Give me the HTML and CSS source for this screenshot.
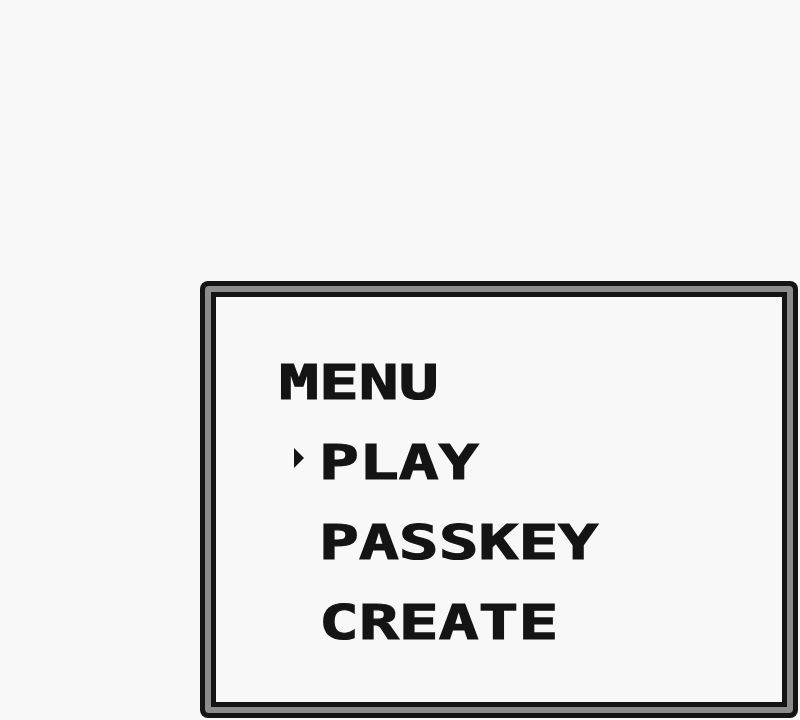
FILE: index.html
```html
<!DOCTYPE html>
<html>
<head>
<meta charset="utf-8">
<link rel="stylesheet" href="styles.css">
</head>
<body>
<div class="screen">
  <div class="frame">
    <div class="rail">
      <div class="panel">
        <div class="row title"><span class="txt">MENU</span></div>
        <div class="row item"><span class="cursor"><span class="tri"></span></span><span class="txt">PLAY</span></div>
        <div class="row item"><span class="cursor"></span><span class="txt">PASSKEY</span></div>
        <div class="row item"><span class="cursor"></span><span class="txt">CREATE</span></div>
      </div>
    </div>
  </div>
</div>
</body>
</html>
```
FILE: styles.css
```css
html, body {
  margin: 0;
  padding: 0;
  background: #f8f8f8;
}
.screen {
  width: 800px;
  height: 720px;
  overflow: hidden;
  display: flex;
  flex-direction: column;
  padding: 281px 0 0 200px;
  box-sizing: border-box;
}
.frame {
  width: 598px;
  height: 437px;
  box-sizing: border-box;
  background: #141414;
  border-radius: 8px;
  padding: 5px;
}
.rail {
  height: 100%;
  box-sizing: border-box;
  background: #8c8c8c;
  border-radius: 4px;
  padding: 6px;
}
.panel {
  height: 100%;
  box-sizing: border-box;
  background: #f8f8f8;
  border: 5px solid #141414;
  padding: 65px 0 0 63px;
  display: flex;
  flex-direction: column;
  gap: 40px;
}
.row {
  height: 40px;
  display: flex;
  align-items: flex-start;
}
.txt {
  display: inline-block;
  font-family: "DejaVu Sans Mono", monospace;
  font-weight: bold;
  font-size: 48px;
  line-height: 40px;
  color: #141414;
  -webkit-text-stroke: 1.2px #141414;
  transform: scaleX(1.38);
  transform-origin: left center;
  white-space: nowrap;
}
.cursor {
  width: 40px;
  height: 40px;
  flex: none;
  display: flex;
  align-items: flex-start;
}
.tri {
  margin: 6px 0 0 15px;
  width: 0;
  height: 0;
  border-left: 10px solid #141414;
  border-top: 10px solid transparent;
  border-bottom: 10px solid transparent;
}
```
